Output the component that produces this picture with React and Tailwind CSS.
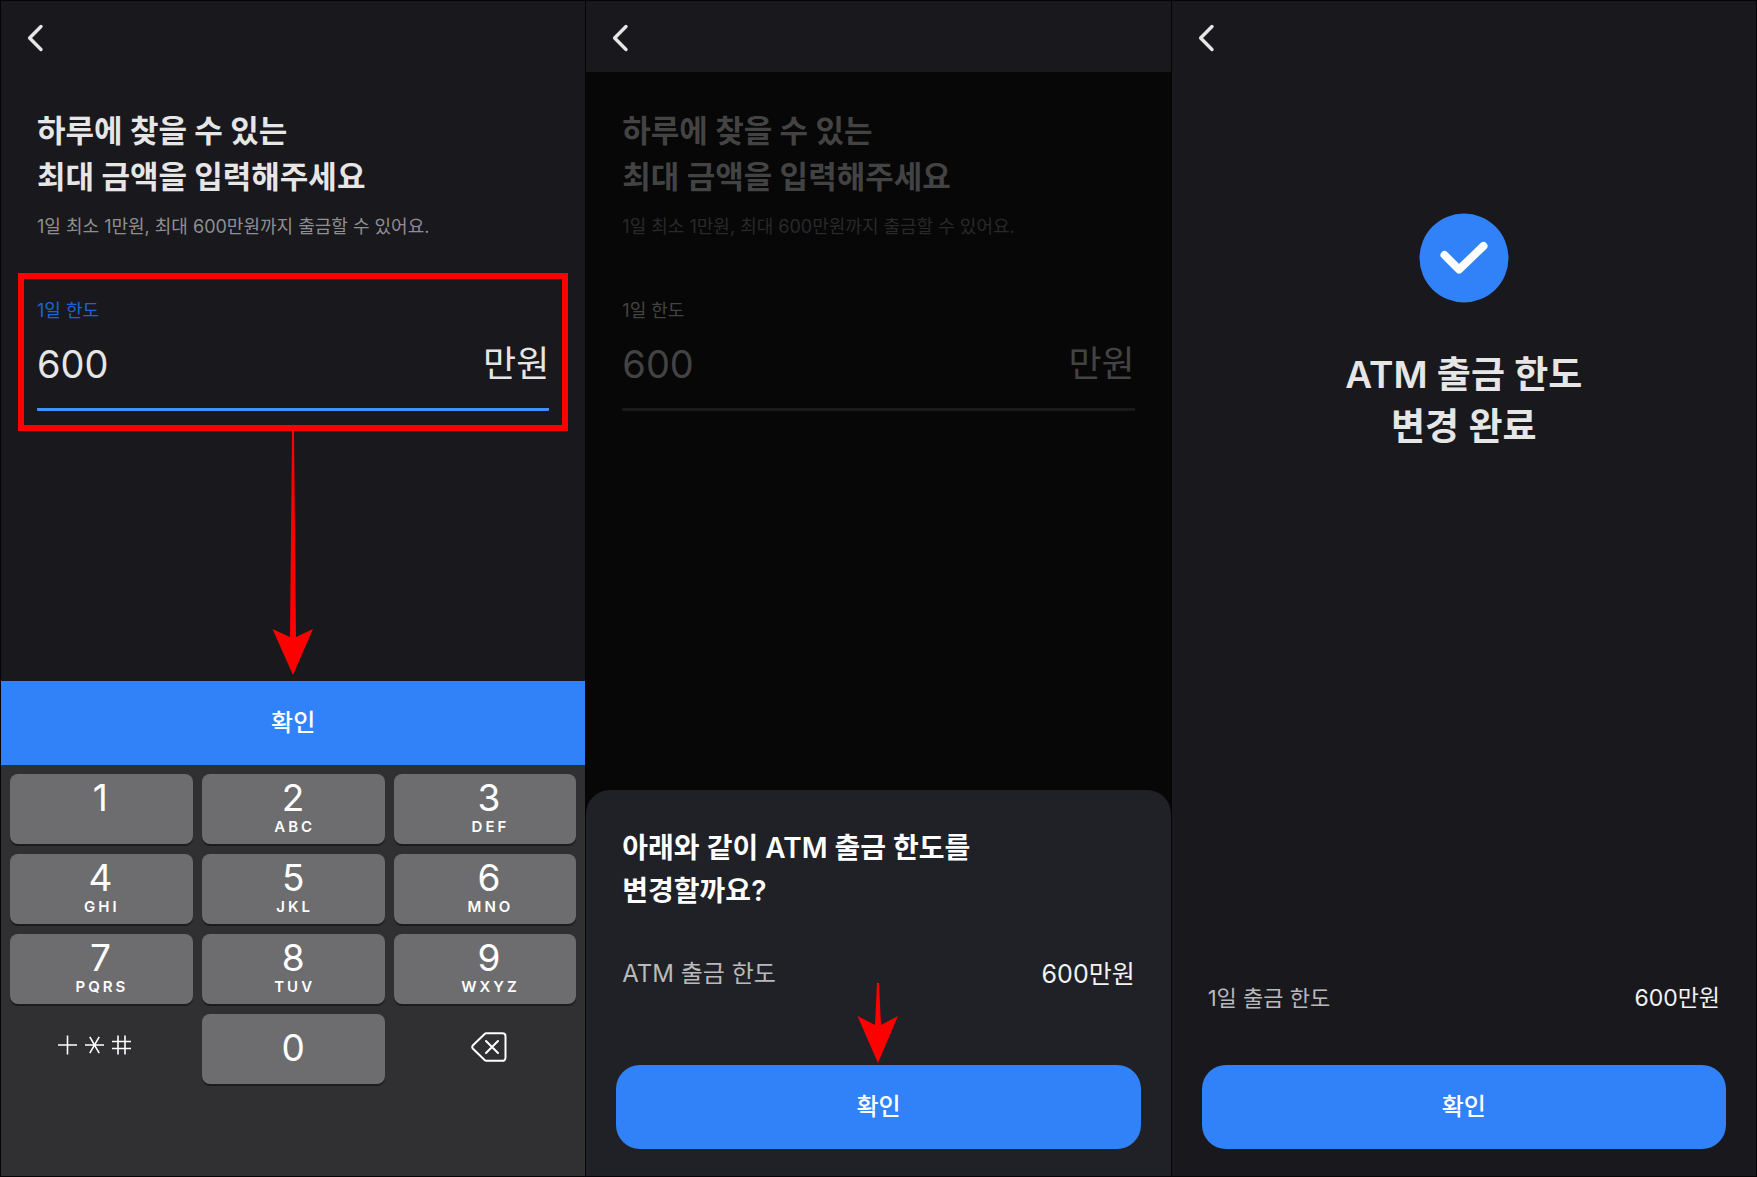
import React from "react";

const KEYS = [
  ["1", ""],
  ["2", "ABC"],
  ["3", "DEF"],
  ["4", "GHI"],
  ["5", "JKL"],
  ["6", "MNO"],
  ["7", "PQRS"],
  ["8", "TUV"],
  ["9", "WXYZ"],
];

const COLUMN_PADDING = ["pr-0.5", "", "pl-2"];

function Screen({ className, children }) {
  return (
    <section className={`flex min-w-0 flex-col border-l border-[#050507] ${className}`}>
      {children}
    </section>
  );
}

function Header() {
  return (
    <header className="flex h-[71px] shrink-0 items-center bg-[#19181d] px-6 pt-0.5">
      <button type="button" aria-label="뒤로" className="text-[#e6e6e6]">
        <svg width="22" height="30" viewBox="0 0 22 30" fill="none" stroke="currentColor" strokeWidth="3.4" strokeLinecap="round" strokeLinejoin="round">
          <path d="M16 3.500 4.600 15 16 26.500" />
        </svg>
      </button>
    </header>
  );
}

function LimitForm({ id, dimmed }) {
  const strong = dimmed ? "text-[#434343]" : "text-[#e6e6e6]";
  return (
    <div>
      <div className="px-9 pt-9">
        <h1 className={`text-[31px] leading-[46px] font-bold ${strong}`}>
          하루에 찾을 수 있는
          <br />
          최대 금액을 입력해주세요
        </h1>
        <p className={`mt-[13px] text-[18px] leading-7 ${dimmed ? "text-[#29292a]" : "text-[#8f8f92]"}`}>
          1일 최소 1만원, 최대 600만원까지 출금할 수 있어요.
        </p>
      </div>
      <div className={`mx-[17px] mt-8 border-6 px-[13px] pt-[18px] pb-[14px] ${dimmed ? "border-transparent" : "border-[#ff0000]"}`}>
        <label htmlFor={id} className={`block text-[18px] leading-7 ${dimmed ? "text-[#434343]" : "text-[#1f62d8]"}`}>
          1일 한도
        </label>
        <div className={`mt-2 flex h-[78px] items-center justify-between rounded-[1px] border-b-3 pb-[13px] leading-[48px] ${strong} ${dimmed ? "border-[#1a1a1a]" : "border-[#4190ff]"}`}>
          <input id={id} type="text" inputMode="numeric" defaultValue="600" className="w-40 bg-transparent text-[38px] outline-none" />
          <span className="text-[36px]">만원</span>
        </div>
      </div>
    </div>
  );
}

function Key({ digit, letters, padding }) {
  return (
    <button type="button" className={`flex h-[70px] flex-col items-center rounded-lg bg-[#6d6d6f] pt-1 text-white shadow-[0_2px_0_#1c1c1e] ${padding}`}>
      <span className="text-[37px] leading-10">{digit}</span>
      <span className="pl-[3px] text-[15px] leading-[18px] font-semibold tracking-[3px]">{letters}</span>
    </button>
  );
}

function Keypad() {
  return (
    <div className="grid grid-cols-3 gap-x-[9px] gap-y-[10px] bg-[#303032] px-[9px] pt-[9px] pb-[92px]">
      {KEYS.map(([digit, letters], i) => (
        <Key key={digit} digit={digit} letters={letters} padding={COLUMN_PADDING[i % 3]} />
      ))}
      <button type="button" aria-label="기호" className="flex items-center justify-center pr-3 pb-2 text-white">
        <svg width="76" height="24" viewBox="0 0 76 24" fill="none" stroke="currentColor" strokeWidth="1.6">
          <path d="M1 12h19M10.500 2.500v19" />
          <path d="M28 12h19M32.800 3.800l9.400 16.400M42.200 3.800l-9.400 16.400" />
          <path d="M55 8.500h19M55 15.500h19M61 2.500v19M68 2.500v19" />
        </svg>
      </button>
      <button type="button" className="flex h-[70px] items-center justify-center rounded-lg bg-[#6d6d6f] pb-0.5 text-[37px] leading-10 text-white shadow-[0_2px_0_#1c1c1e]">
        0
      </button>
      <button type="button" aria-label="지우기" className="flex items-center justify-center pb-1 pl-2 text-white">
        <svg width="36" height="30" viewBox="0 0 36 30" fill="none" stroke="currentColor" strokeWidth="2" strokeLinecap="round" strokeLinejoin="round">
          <path d="M15.600 1.200H31.500a3 3 0 0 1 3 3v21.600a3 3 0 0 1-3 3H15.600a3 3 0 0 1-2.200-1L2 16.700a2.500 2.500 0 0 1 0-3.400L13.400 2.200a3 3 0 0 1 2.200-1Z" />
          <path d="m15 9 12 12M27 9l-12 12" />
        </svg>
      </button>
    </div>
  );
}

function ConfirmButton({ className }) {
  return (
    <button type="button" className={`h-[84px] bg-[#3182f8] text-[24px] leading-8 font-medium text-white ${className}`}>
      확인
    </button>
  );
}

function AmountRow({ label, value, className, valueSize }) {
  return (
    <dl className={`flex items-center justify-between leading-8 ${className}`}>
      <dt className="text-[#b9b9bc]">{label}</dt>
      <dd className={`text-[#f2f2f3] ${valueSize}`}>{value}</dd>
    </dl>
  );
}

export default function App() {
  return (
    <main
      lang="ko"
      className="grid min-h-screen grid-cols-3 border-y border-r border-[#050507] bg-[#19181d] font-['Inter','Noto_Sans_CJK_KR',sans-serif]"
    >
      <Screen className="bg-[#19181d]">
        <Header />
        <LimitForm id="limit-input" />
        <div className="flex flex-1 justify-center">
          <svg width="42" height="244" viewBox="0 0 42 244" fill="#ff0000" aria-hidden="true">
            <path d="M20 0h2l2 206 17-8L21 244 0.500 198l17.500 8Z" />
          </svg>
        </div>
        <ConfirmButton className="w-full" />
        <Keypad />
      </Screen>

      <Screen className="bg-[#070707]">
        <Header />
        <LimitForm id="limit-dimmed" dimmed />
        <div role="dialog" aria-labelledby="sheet-title" className="mt-auto rounded-t-3xl bg-[#202126] px-[30px] pt-[37px] pb-[27px]">
          <h2 id="sheet-title" className="px-1.5 text-[28px] leading-[43px] font-semibold text-white">
            아래와 같이 ATM 출금 한도를
            <br />
            변경할까요?
          </h2>
          <AmountRow label="ATM 출금 한도" value="600만원" className="mt-[45px] px-1.5 text-[24px]" valueSize="text-[25px]" />
          <div className="relative mt-[75px]">
            <svg width="42" height="80" viewBox="0 0 42 80" fill="#ff0000" aria-hidden="true" className="absolute bottom-full left-1/2 mb-[2px] -translate-x-1/2">
              <path d="M20 0h2l2 42 17-9L21 80 0.500 33 18 42Z" />
            </svg>
            <ConfirmButton className="w-full rounded-3xl" />
          </div>
        </div>
      </Screen>

      <Screen className="bg-[#19181d]">
        <Header />
        <div className="mt-[141px] flex flex-col items-center">
          <svg width="90" height="90" viewBox="0 0 90 90" fill="none" aria-hidden="true">
            <circle cx="45" cy="45" r="44.500" fill="#3182f8" />
            <path d="M25.500 42 40 56.500 64.500 33" stroke="#fff" strokeWidth="8" strokeLinecap="round" strokeLinejoin="round" />
          </svg>
          <h1 className="mt-[46px] text-center text-[37px] leading-[52px] font-semibold text-[#e6e6e6]">
            ATM 출금 한도
            <br />
            변경 완료
          </h1>
        </div>
        <div className="mt-auto px-[30px] pb-[27px]">
          <AmountRow label="1일 출금 한도" value="600만원" className="px-1.5 text-[22px]" valueSize="text-[23px]" />
          <ConfirmButton className="mt-[51px] w-full rounded-3xl" />
        </div>
      </Screen>
    </main>
  );
}
